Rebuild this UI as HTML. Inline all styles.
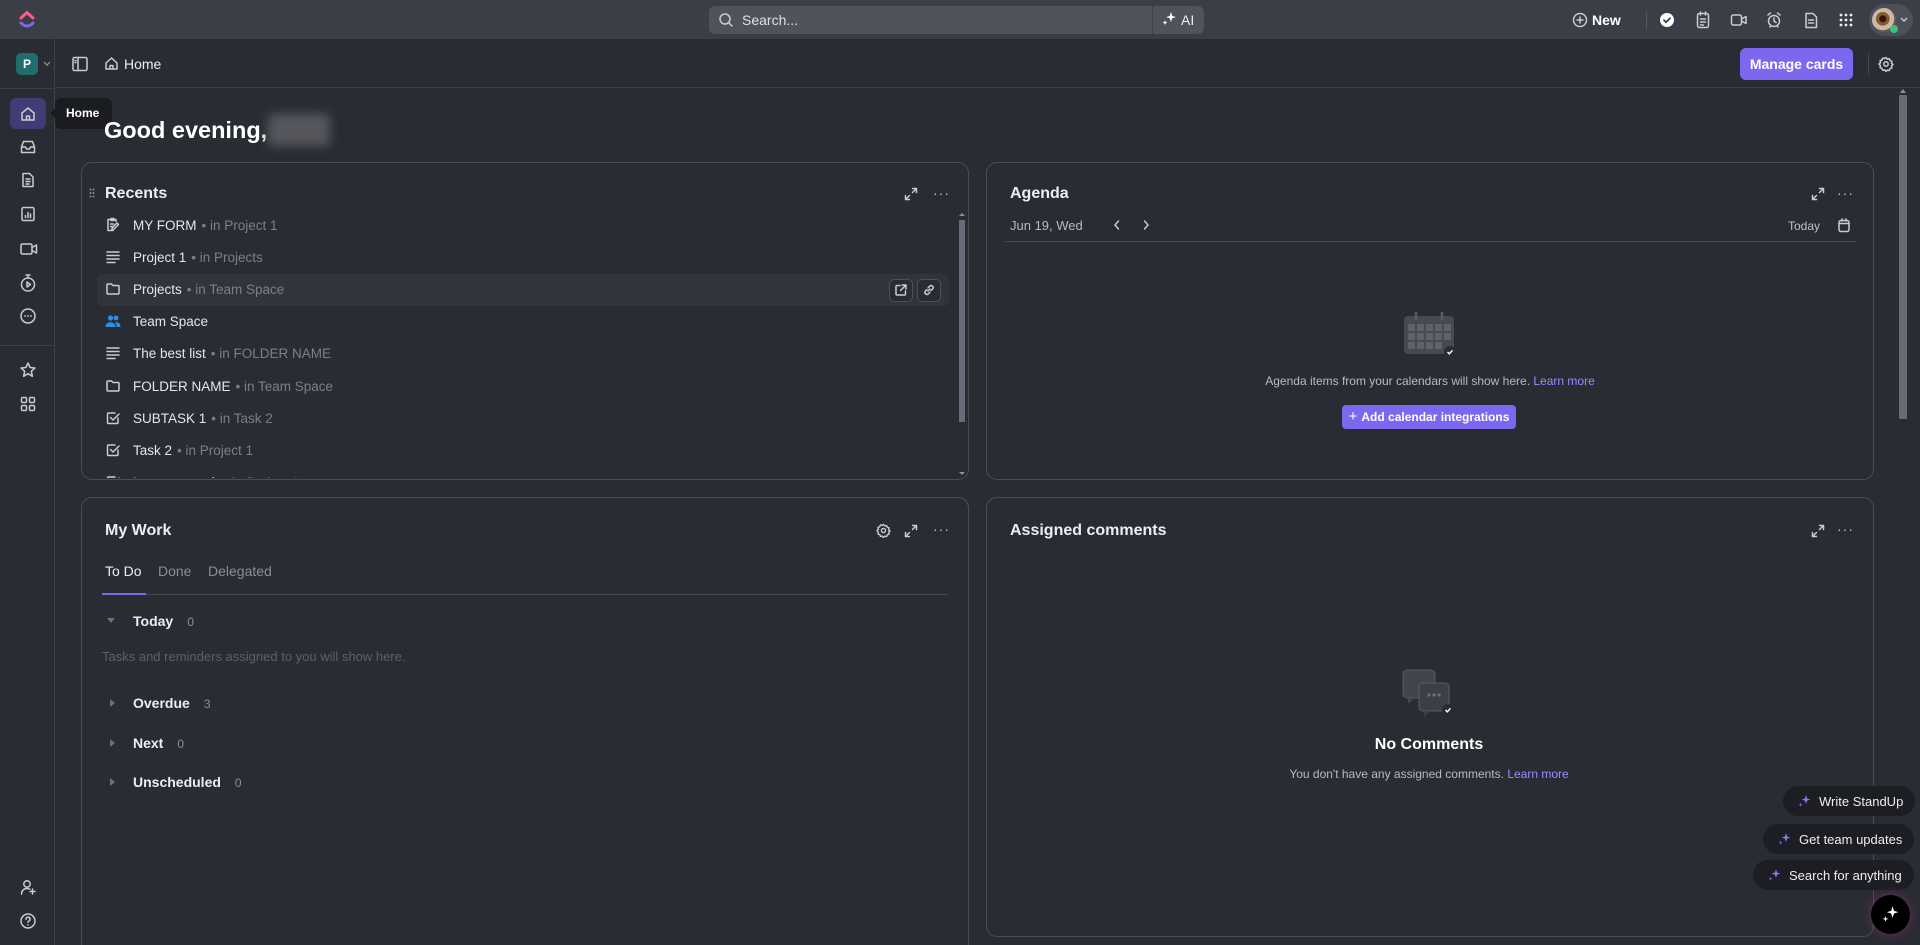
<!DOCTYPE html>
<html><head><meta charset="utf-8"><style>
*{box-sizing:border-box;margin:0;padding:0}
html,body{width:1920px;height:945px;overflow:hidden}
body{background:#2a2c33;font-family:"Liberation Sans",sans-serif;color:#e3e4e8;position:relative;font-size:14px}
.a{position:absolute}
svg{display:block}
.top{left:0;top:0;width:1920px;height:39px;background:#3b3e46}
.side{left:0;top:39px;width:55px;height:906px;background:#2a2c33;border-right:1px solid #3d4048}
.hdr{left:55px;top:39px;width:1865px;height:49px;border-bottom:1px solid #3d4048}
.card{border:1px solid #4a4d56;border-radius:11px;background:#2a2c33}
.ttl{font-size:16px;font-weight:bold;color:#eceef1}
.row{left:97px;width:852px;height:32px;display:flex;align-items:center;padding-left:6px;font-size:13.5px;color:#e6e7ea}
.row .ic{width:20px;margin-right:10px;display:flex;justify-content:center}
.row .m{color:#7c7f88;margin-left:5px}
.ico{stroke:#c9cbd1;fill:none;stroke-width:1.5;stroke-linecap:round;stroke-linejoin:round}
.sec{font-size:14px;font-weight:bold;color:#eceef1}
.cnt{font-size:12px;color:#8b8e97;margin-left:14px;font-weight:normal}
.pill{background:#1d1e23;border-radius:16px;height:30px;display:flex;align-items:center;padding:0 12px 0 14px;font-size:13px;color:#eceef1;white-space:nowrap}
.pill svg{margin-right:8px}
</style></head><body>
<div class="a top"></div>
<svg class="a" style="left:18px;top:10px" width="18" height="20" viewBox="0 0 18 20"><path d="M3 8 L9 2.5 L15 8" stroke="#ff5b8a" stroke-width="3" fill="none" stroke-linecap="round" stroke-linejoin="round"/><path d="M3 13 Q9 19 15 13" stroke="#7b68ee" stroke-width="3" fill="none" stroke-linecap="round"/></svg>
<div class="a" style="left:709px;top:6px;width:495px;height:28px;background:#4f535b;border-radius:6px"></div>
<svg class="a" style="left:718px;top:12px" width="16" height="16" viewBox="0 0 16 16"><circle cx="7" cy="7" r="5" class="ico" stroke="#d6d8dc"/><path d="M11 11 L14 14" class="ico" stroke="#d6d8dc"/></svg>
<div class="a" style="left:742px;top:12px;font-size:14px;color:#dfe0e4">Search...</div>
<div class="a" style="left:1152px;top:6px;width:1px;height:28px;background:#3d4048"></div>
<svg class="a" style="left:1161px;top:11px" width="16" height="16" viewBox="0 0 16 16"><path d="M10 1 L11.3 5 L15 6 L11.3 7.3 L10 11 L8.7 7.3 L5 6 L8.7 5Z" fill="#fff"/><path d="M4 9 L4.7 11 L6.5 11.5 L4.7 12.2 L4 14 L3.3 12.2 L1.5 11.5 L3.3 11Z" fill="#fff"/></svg>
<div class="a" style="left:1181px;top:12px;font-size:14px;color:#eceef1">AI</div>
<svg class="a" style="left:1572px;top:12px" width="16" height="16" viewBox="0 0 16 16"><circle cx="8" cy="8" r="6.5" class="ico" stroke="#fff"/><path d="M8 5v6M5 8h6" class="ico" stroke="#fff"/></svg>
<div class="a" style="left:1592px;top:12px;font-size:14px;font-weight:bold;color:#fff">New</div>
<div class="a" style="left:1646px;top:12px;width:1px;height:17px;background:#565a62"></div>
<svg class="a" style="left:1659px;top:12px" width="16" height="16" viewBox="0 0 16 16"><circle cx="8" cy="8" r="7" fill="#fff"/><path d="M5 8.2l2 2 4-4" stroke="#3b3e46" stroke-width="1.8" fill="none" stroke-linecap="round"/></svg>
<svg class="a" style="left:1695px;top:11px" width="16" height="18" viewBox="0 0 16 18"><rect x="2.5" y="2.5" width="11" height="14" rx="2" class="ico" stroke="#eee"/><path d="M5.5 1v3M10.5 1v3M5.5 8h5M5.5 11h5M5.5 14h3" class="ico" stroke="#eee"/></svg>
<svg class="a" style="left:1730px;top:12px" width="18" height="16" viewBox="0 0 18 16"><rect x="1.5" y="3" width="10" height="10" rx="2" class="ico" stroke="#eee"/><path d="M11.5 7 L16 4.5 V11.5 L11.5 9" class="ico" stroke="#eee"/></svg>
<svg class="a" style="left:1766px;top:11px" width="16" height="18" viewBox="0 0 16 18"><circle cx="8" cy="10" r="5.5" class="ico" stroke="#eee"/><path d="M8 7v3l2 1.5M2 4l2.5-2M14 4l-2.5-2M4 16l1-1.5M12 16l-1-1.5" class="ico" stroke="#eee"/></svg>
<svg class="a" style="left:1803px;top:11px" width="16" height="18" viewBox="0 0 16 18"><path d="M3 2.5h7l3.5 3.5v10.5H3z" class="ico" stroke="#eee"/><path d="M5.5 9h5M5.5 12h5" class="ico" stroke="#eee"/></svg>
<svg class="a" style="left:1838px;top:12px" width="16" height="16" viewBox="0 0 16 16" fill="#eee"><circle cx="3" cy="3" r="1.4"/><circle cx="8" cy="3" r="1.4"/><circle cx="13" cy="3" r="1.4"/><circle cx="3" cy="8" r="1.4"/><circle cx="8" cy="8" r="1.4"/><circle cx="13" cy="8" r="1.4"/><circle cx="3" cy="13" r="1.4"/><circle cx="8" cy="13" r="1.4"/><circle cx="13" cy="13" r="1.4"/></svg>
<div class="a" style="left:1869px;top:4px;width:44px;height:32px;border-radius:16px;background:#4d5058"></div>
<div class="a" style="left:1872px;top:8px;width:24px;height:24px;border-radius:50%;background:radial-gradient(circle at 45% 45%,#2a1a10 0 18%,#8a5a2e 20% 35%,#c8b9a8 38% 60%,#6b5a4a 62%)"></div>
<div class="a" style="left:1890px;top:25px;width:8px;height:8px;border-radius:50%;background:#3fbf7f"></div>
<svg class="a" style="left:1900px;top:17px" width="8" height="6" viewBox="0 0 8 6"><path d="M1 1l3 3 3-3" stroke="#ddd" fill="none" stroke-width="1.2"/></svg>

<div class="a side"></div>
<div class="a" style="left:16px;top:53px;width:22px;height:22px;border-radius:5px;background:#1f6e6b;color:#fff;font-weight:bold;font-size:12px;text-align:center;line-height:22px">P</div>
<svg class="a" style="left:43px;top:61px" width="8" height="6" viewBox="0 0 8 6"><path d="M1 1l3 3 3-3" stroke="#999" fill="none" stroke-width="1.2"/></svg>
<div class="a" style="left:0;top:88px;width:55px;height:1px;background:#3d4048"></div>
<div class="a" style="left:10px;top:98px;width:36px;height:31px;border-radius:6px;background:#413c75"></div>
<svg class="a" style="left:19px;top:105px" width="18" height="18" viewBox="0 0 18 18"><path d="M3 8 L9 3 L15 8 V15 H3Z M7.5 15 V11 H10.5 V15" class="ico" stroke="#b6adff"/></svg>
<svg class="a" style="left:19px;top:138px" width="18" height="18" viewBox="0 0 18 18"><path d="M2.5 9 L4.5 3.5 H13.5 L15.5 9 V14.5 H2.5Z M2.5 9 H6.5 L7.5 11 H10.5 L11.5 9 H15.5" class="ico"/></svg>
<svg class="a" style="left:19px;top:171px" width="18" height="18" viewBox="0 0 18 18"><path d="M4 2.5h6.5L14 6v9.5H4z M7 8h4M7 10.5h4M7 13h3" class="ico"/></svg>
<svg class="a" style="left:19px;top:205px" width="18" height="18" viewBox="0 0 18 18"><rect x="3" y="2.5" width="12" height="13" rx="1.5" class="ico"/><path d="M6.5 12.5v-2M9 12.5v-5M11.5 12.5v-3.5" class="ico"/></svg>
<svg class="a" style="left:19px;top:240px" width="20" height="18" viewBox="0 0 20 18"><rect x="2" y="4" width="11" height="10" rx="1.5" class="ico"/><path d="M13 7.5 L17.5 5 V13 L13 10.5" class="ico"/></svg>
<svg class="a" style="left:19px;top:273px" width="18" height="20" viewBox="0 0 18 20"><circle cx="9" cy="11.5" r="6.5" class="ico"/><path d="M7 2h4M9 2v3M8 9v5l3.5-2.5z" class="ico"/></svg>
<svg class="a" style="left:19px;top:307px" width="18" height="18" viewBox="0 0 18 18"><circle cx="9" cy="9" r="7" class="ico"/><circle cx="6" cy="9" r=".9" fill="#c9cbd1"/><circle cx="9" cy="9" r=".9" fill="#c9cbd1"/><circle cx="12" cy="9" r=".9" fill="#c9cbd1"/></svg>
<div class="a" style="left:0;top:345px;width:55px;height:1px;background:#3d4048"></div>
<svg class="a" style="left:19px;top:361px" width="18" height="18" viewBox="0 0 18 18"><path d="M9 2 L11.1 6.5 L16 7 L12.3 10.3 L13.4 15.3 L9 12.7 L4.6 15.3 L5.7 10.3 L2 7 L6.9 6.5Z" class="ico"/></svg>
<svg class="a" style="left:19px;top:395px" width="18" height="18" viewBox="0 0 18 18"><rect x="2.5" y="2.5" width="5" height="5" rx="1.2" class="ico"/><rect x="10.5" y="2.5" width="5" height="5" rx="1.2" class="ico"/><rect x="2.5" y="10.5" width="5" height="5" rx="1.2" class="ico"/><rect x="10.5" y="10.5" width="5" height="5" rx="1.2" class="ico"/></svg>
<svg class="a" style="left:19px;top:878px" width="18" height="18" viewBox="0 0 18 18"><circle cx="8" cy="6" r="3.2" class="ico"/><path d="M2.5 16c0-3.5 2.5-5.5 5.5-5.5 1 0 2 .2 2.8.7M13.5 11v5M11 13.5h5" class="ico"/></svg>
<svg class="a" style="left:19px;top:912px" width="18" height="18" viewBox="0 0 18 18"><circle cx="9" cy="9" r="7" class="ico"/><path d="M7 7.2a2 2 0 1 1 2.8 1.8c-.6.3-.8.7-.8 1.3" class="ico"/><circle cx="9" cy="12.8" r=".8" fill="#c9cbd1"/></svg>
<div class="a" style="left:55px;top:98px;width:57px;height:31px;border-radius:6px;background:#1b1c20;color:#fff;font-size:12px;font-weight:bold;line-height:31px;padding-left:11px">Home</div>
<div class="a" style="left:50px;top:108px;width:0;height:0;border-top:5px solid transparent;border-bottom:5px solid transparent;border-right:5px solid #1b1c20"></div>

<div class="a hdr"></div>
<svg class="a" style="left:71px;top:55px" width="18" height="18" viewBox="0 0 18 18"><rect x="2" y="2.5" width="14" height="13" rx="1.5" class="ico"/><path d="M7 2.5v13M4 5.5h1M4 7.5h1" class="ico"/></svg>
<svg class="a" style="left:104px;top:56px" width="15" height="15" viewBox="0 0 15 15"><path d="M2 7 L7.5 2 L13 7 V13 H2Z M6 13 V9.5 H9 V13" class="ico" stroke="#e6e7ea"/></svg>
<div class="a" style="left:124px;top:56px;font-size:14px;color:#eceef1">Home</div>
<div class="a" style="left:1740px;top:48px;width:113px;height:32px;border-radius:6px;background:#7b68ee;color:#fff;font-weight:bold;font-size:14px;text-align:center;line-height:32px">Manage cards</div>
<div class="a" style="left:1868px;top:53px;width:1px;height:22px;background:#454850"></div>
<svg class="a" style="left:1878px;top:56px" width="16" height="16" viewBox="0 0 16 16"><circle cx="8" cy="8" r="2.2" class="ico"/><path d="M8 1.5l1.3 1.6 2-.4.7 1.9 1.9.7-.4 2L15 8.6l-1.5 1.3.4 2-1.9.7-.7 1.9-2-.4L8 15.5l-1.3-1.6-2 .4-.7-1.9-1.9-.7.4-2L1 8l1.5-1.3-.4-2 1.9-.7.7-1.9 2 .4z" class="ico" stroke-width="1.2"/></svg>
<div class="a" style="left:1899px;top:95px;width:8px;height:324px;background:#666c78;border-radius:1px"></div>
<div class="a" style="left:1900px;top:89px;width:0;height:0;border-left:3px solid transparent;border-right:3px solid transparent;border-bottom:4px solid #8a8f99"></div>

<div class="a" style="left:104px;top:117px;font-size:23.5px;font-weight:bold;color:#fff">Good evening,</div>
<div class="a" style="left:268px;top:114px;width:62px;height:32px;background:#55575d;filter:blur(5px);border-radius:4px"></div>

<!-- Recents -->
<div class="a card" style="left:81px;top:162px;width:888px;height:318px"></div>
<svg class="a" style="left:89px;top:188px" width="6" height="10" viewBox="0 0 6 10" fill="#8a8d95"><circle cx="1.5" cy="1.5" r="1"/><circle cx="4.5" cy="1.5" r="1"/><circle cx="1.5" cy="5" r="1"/><circle cx="4.5" cy="5" r="1"/><circle cx="1.5" cy="8.5" r="1"/><circle cx="4.5" cy="8.5" r="1"/></svg>
<div class="a ttl" style="left:105px;top:185px">Recents</div>
<svg class="a" style="left:904px;top:187px" width="14" height="14" viewBox="0 0 14 14"><path d="M8.5 1.5h4v4M12.5 1.5L8.5 5.5M5.5 12.5h-4v-4M1.5 12.5l4-4" class="ico" stroke="#b0b3ba"/></svg>
<div class="a" style="left:933px;top:185px;color:#c0c2c8;font-size:14px;letter-spacing:1px">···</div>
<div class="a" style="left:97px;top:274px;width:852px;height:32px;border-radius:6px;background:#31343b"></div>
<div class="a" style="left:889px;top:279px;width:24px;height:23px;border:1px solid #4d5058;border-radius:5px;background:#2a2c33"></div>
<svg class="a" style="left:894px;top:283px" width="14" height="14" viewBox="0 0 14 14"><path d="M6 2.5H3a1 1 0 0 0-1 1v7.5a1 1 0 0 0 1 1h7.5a1 1 0 0 0 1-1V8M8 2h4v4M12 2L6.5 7.5" class="ico" stroke="#c5c7cd" stroke-width="1.3"/></svg>
<div class="a" style="left:917px;top:279px;width:24px;height:23px;border:1px solid #4d5058;border-radius:5px;background:#2a2c33"></div>
<svg class="a" style="left:922px;top:283px" width="14" height="14" viewBox="0 0 14 14"><path d="M6 8l2-2M5 6.5L3.3 8.2a2 2 0 0 0 2.8 2.8L7.8 9.3M9 7.5l1.7-1.7a2 2 0 0 0-2.8-2.8L6.2 4.7" class="ico" stroke="#c5c7cd" stroke-width="1.3"/></svg>
<div class="a" style="left:959px;top:220px;width:6px;height:202px;background:#666c78"></div>
<div class="a" style="left:959px;top:213px;width:0;height:0;border-left:3px solid transparent;border-right:3px solid transparent;border-bottom:3px solid #8a8f99"></div>
<div class="a" style="left:959px;top:472px;width:0;height:0;border-left:3px solid transparent;border-right:3px solid transparent;border-top:3px solid #8a8f99"></div>
<div class="a" style="left:82px;top:214px;width:870px;height:264px;overflow:hidden">
<div class="a row" style="left:15px;top:-5px"><span class="ic"><svg width="16" height="16" viewBox="0 0 16 16"><path d="M4 2.5h7v2M4 2.5H3v11h5M6 1.5h3v2H6z M7 11l5-5 1.5 1.5-5 5H7z M5.5 7h3M5.5 9.5h2" class="ico" stroke-width="1.2"/></svg></span>MY FORM<span class="m">• in Project 1</span></div>
<div class="a row" style="left:15px;top:27px"><span class="ic"><svg width="16" height="14" viewBox="0 0 16 14"><path d="M2 2h12M2 5.5h12M2 9h12M2 12.5h8" class="ico" stroke-width="1.3"/></svg></span>Project 1<span class="m">• in Projects</span></div>
<div class="a row" style="left:15px;top:59px"><span class="ic"><svg width="16" height="14" viewBox="0 0 16 14"><path d="M2 3a1 1 0 0 1 1-1h3.5l1.5 1.5h5a1 1 0 0 1 1 1V11a1 1 0 0 1-1 1H3a1 1 0 0 1-1-1z" class="ico" stroke-width="1.3"/></svg></span>Projects<span class="m">• in Team Space</span></div>
<div class="a row" style="left:15px;top:91px"><span class="ic"><svg width="16" height="14" viewBox="0 0 16 14" fill="#2d8fe6"><circle cx="5.5" cy="4" r="2.6"/><circle cx="11" cy="4" r="2.4"/><path d="M0.5 13c0-3 2.2-4.8 5-4.8s5 1.8 5 4.8z"/><path d="M11.5 8.2c2.4 0 4 1.7 4 4.8h-4c0-2-.6-3.6-1.8-4.6.5-.1 1.1-.2 1.8-.2z"/></svg></span>Team Space</div>
<div class="a row" style="left:15px;top:123px"><span class="ic"><svg width="16" height="14" viewBox="0 0 16 14"><path d="M2 2h12M2 5.5h12M2 9h12M2 12.5h8" class="ico" stroke-width="1.3"/></svg></span>The best list<span class="m">• in FOLDER NAME</span></div>
<div class="a row" style="left:15px;top:156px"><span class="ic"><svg width="16" height="14" viewBox="0 0 16 14"><path d="M2 3a1 1 0 0 1 1-1h3.5l1.5 1.5h5a1 1 0 0 1 1 1V11a1 1 0 0 1-1 1H3a1 1 0 0 1-1-1z" class="ico" stroke-width="1.3"/></svg></span>FOLDER NAME<span class="m">• in Team Space</span></div>
<div class="a row" style="left:15px;top:188px"><span class="ic"><svg width="16" height="16" viewBox="0 0 16 16"><path d="M13 8v4.5a1 1 0 0 1-1 1H3.5a1 1 0 0 1-1-1V4a1 1 0 0 1 1-1H10M5.5 7.5l2.5 2.5 6-6" class="ico" stroke-width="1.3"/></svg></span>SUBTASK 1<span class="m">• in Task 2</span></div>
<div class="a row" style="left:15px;top:220px"><span class="ic"><svg width="16" height="16" viewBox="0 0 16 16"><path d="M13 8v4.5a1 1 0 0 1-1 1H3.5a1 1 0 0 1-1-1V4a1 1 0 0 1 1-1H10M5.5 7.5l2.5 2.5 6-6" class="ico" stroke-width="1.3"/></svg></span>Task 2<span class="m">• in Project 1</span></div>
<div class="a row" style="left:15px;top:252px"><span class="ic"><svg width="16" height="16" viewBox="0 0 16 16"><path d="M13 8v4.5a1 1 0 0 1-1 1H3.5a1 1 0 0 1-1-1V4a1 1 0 0 1 1-1H10M5.5 7.5l2.5 2.5 6-6" class="ico" stroke-width="1.3"/></svg></span>Important task<span class="m">• in Project 1</span></div>
</div>

<!-- Agenda -->
<div class="a card" style="left:986px;top:162px;width:888px;height:318px"></div>
<div class="a ttl" style="left:1010px;top:185px">Agenda</div>
<svg class="a" style="left:1811px;top:187px" width="14" height="14" viewBox="0 0 14 14"><path d="M8.5 1.5h4v4M12.5 1.5L8.5 5.5M5.5 12.5h-4v-4M1.5 12.5l4-4" class="ico" stroke="#5d6068"/></svg>
<div class="a" style="left:1837px;top:185px;color:#c0c2c8;font-size:14px;letter-spacing:1px">···</div>
<div class="a" style="left:1010px;top:218px;font-size:13px;color:#b8bac0">Jun 19, Wed</div>
<svg class="a" style="left:1112px;top:219px" width="10" height="12" viewBox="0 0 10 12"><path d="M6.5 2L3 6l3.5 4" class="ico" stroke="#c5c7cd"/></svg>
<svg class="a" style="left:1141px;top:219px" width="10" height="12" viewBox="0 0 10 12"><path d="M3.5 2L7 6l-3.5 4" class="ico" stroke="#c5c7cd"/></svg>
<div class="a" style="left:1788px;top:219px;font-size:12px;color:#c0c2c8">Today</div>
<svg class="a" style="left:1837px;top:218px" width="14" height="15" viewBox="0 0 14 15"><rect x="2" y="2.5" width="10" height="11" rx="2" class="ico" stroke="#c0c2c8" stroke-width="1.3"/><path d="M2 5.5h10M5 1v2M9 1v2" class="ico" stroke="#c0c2c8" stroke-width="1.3"/></svg>
<div class="a" style="left:1005px;top:241px;width:851px;height:1px;background:#454850"></div>
<svg class="a" style="left:1401px;top:310px" width="56" height="50" viewBox="0 0 56 50"><rect x="3" y="6" width="50" height="38" rx="4" fill="#474a52"/><path d="M15 2v8M41 2v8" stroke="#5a5d65" stroke-width="2.5"/><g fill="#5f626a"><rect x="7" y="14" width="7" height="7" rx="1"/><rect x="16" y="14" width="7" height="7" rx="1"/><rect x="25" y="14" width="7" height="7" rx="1"/><rect x="34" y="14" width="7" height="7" rx="1"/><rect x="43" y="14" width="7" height="7" rx="1"/><rect x="7" y="23" width="7" height="7" rx="1"/><rect x="16" y="23" width="7" height="7" rx="1"/><rect x="25" y="23" width="7" height="7" rx="1"/><rect x="34" y="23" width="7" height="7" rx="1"/><rect x="43" y="23" width="7" height="7" rx="1"/><rect x="7" y="32" width="7" height="7" rx="1"/><rect x="16" y="32" width="7" height="7" rx="1"/><rect x="25" y="32" width="7" height="7" rx="1"/><rect x="34" y="32" width="7" height="7" rx="1"/></g><circle cx="49" cy="42" r="6" fill="#2a2c33"/><path d="M46.5 42l1.8 1.8 3.2-3.5" stroke="#fff" stroke-width="1.4" fill="none"/></svg>
<div class="a" style="left:1180px;top:374px;width:500px;text-align:center;font-size:12px;color:#b8bac0">Agenda items from your calendars will show here. <span style="color:#9b8cff">Learn more</span></div>
<div class="a" style="left:1342px;top:405px;width:174px;height:24px;border-radius:4px;background:#7b68ee;color:#fff;font-size:12px;font-weight:bold;line-height:24px;text-align:center"><span style="font-weight:normal;font-size:15px;margin-right:4px">+</span>Add calendar integrations</div>

<!-- My Work -->
<div class="a card" style="left:81px;top:497px;width:888px;height:470px"></div>
<div class="a ttl" style="left:105px;top:522px">My Work</div>
<svg class="a" style="left:876px;top:523px" width="15" height="15" viewBox="0 0 16 16"><circle cx="8" cy="8" r="2.2" class="ico" stroke="#b0b3ba"/><path d="M8 1.5l1.3 1.6 2-.4.7 1.9 1.9.7-.4 2L15 8.6l-1.5 1.3.4 2-1.9.7-.7 1.9-2-.4L8 15.5l-1.3-1.6-2 .4-.7-1.9-1.9-.7.4-2L1 8l1.5-1.3-.4-2 1.9-.7.7-1.9 2 .4z" class="ico" stroke="#b0b3ba" stroke-width="1.2"/></svg>
<svg class="a" style="left:904px;top:524px" width="14" height="14" viewBox="0 0 14 14"><path d="M8.5 1.5h4v4M12.5 1.5L8.5 5.5M5.5 12.5h-4v-4M1.5 12.5l4-4" class="ico" stroke="#b0b3ba"/></svg>
<div class="a" style="left:933px;top:521px;color:#c0c2c8;font-size:14px;letter-spacing:1px">···</div>
<div class="a" style="left:105px;top:563px;font-size:14px;color:#eceef1">To Do</div>
<div class="a" style="left:158px;top:563px;font-size:14px;color:#8b8e97">Done</div>
<div class="a" style="left:208px;top:563px;font-size:14px;color:#8b8e97">Delegated</div>
<div class="a" style="left:102px;top:594px;width:846px;height:1px;background:#454850"></div>
<div class="a" style="left:102px;top:593px;width:44px;height:2px;background:#7b68ee"></div>
<div class="a" style="left:107px;top:618px;width:0;height:0;border-left:4px solid transparent;border-right:4px solid transparent;border-top:5px solid #6d7078"></div>
<div class="a sec" style="left:133px;top:613px">Today<span class="cnt">0</span></div>
<div class="a" style="left:102px;top:649px;font-size:13px;color:#5d6068">Tasks and reminders assigned to you will show here.</div>
<div class="a" style="left:110px;top:699px;width:0;height:0;border-top:4px solid transparent;border-bottom:4px solid transparent;border-left:5px solid #6d7078"></div>
<div class="a sec" style="left:133px;top:695px">Overdue<span class="cnt">3</span></div>
<div class="a" style="left:110px;top:739px;width:0;height:0;border-top:4px solid transparent;border-bottom:4px solid transparent;border-left:5px solid #6d7078"></div>
<div class="a sec" style="left:133px;top:735px">Next<span class="cnt">0</span></div>
<div class="a" style="left:110px;top:778px;width:0;height:0;border-top:4px solid transparent;border-bottom:4px solid transparent;border-left:5px solid #6d7078"></div>
<div class="a sec" style="left:133px;top:774px">Unscheduled<span class="cnt">0</span></div>

<!-- Assigned comments -->
<div class="a card" style="left:986px;top:497px;width:888px;height:440px"></div>
<div class="a ttl" style="left:1010px;top:522px">Assigned comments</div>
<svg class="a" style="left:1811px;top:524px" width="14" height="14" viewBox="0 0 14 14"><path d="M8.5 1.5h4v4M12.5 1.5L8.5 5.5M5.5 12.5h-4v-4M1.5 12.5l4-4" class="ico" stroke="#5d6068"/></svg>
<div class="a" style="left:1837px;top:521px;color:#c0c2c8;font-size:14px;letter-spacing:1px">···</div>
<svg class="a" style="left:1401px;top:668px" width="56" height="50" viewBox="0 0 56 50"><rect x="2" y="2" width="32" height="28" rx="4" fill="#42454d" stroke="#55585f"/><path d="M7 30v6l6-6" fill="#42454d"/><rect x="18" y="15" width="30" height="28" rx="4" fill="#3c3f47" stroke="#5a5d65"/><path d="M23 43v6l6-6" fill="#3c3f47"/><g fill="#6d7078"><circle cx="28" cy="27" r="1.6"/><circle cx="33" cy="27" r="1.6"/><circle cx="38" cy="27" r="1.6"/></g><circle cx="47" cy="42" r="6" fill="#2a2c33"/><path d="M44.5 42l1.8 1.8 3.2-3.5" stroke="#fff" stroke-width="1.4" fill="none"/></svg>
<div class="a" style="left:1229px;top:736px;width:400px;text-align:center;font-size:16px;font-weight:bold;color:#fff">No Comments</div>
<div class="a" style="left:1179px;top:767px;width:500px;text-align:center;font-size:12px;color:#b8bac0">You don't have any assigned comments. <span style="color:#9b8cff">Learn more</span></div>

<svg width="0" height="0" style="position:absolute"><defs><g id="sp"><path d="M9 1 L10.1 4.6 L13.5 5.5 L10.1 6.6 L9 10 L7.9 6.6 L4.5 5.5 L7.9 4.6Z" fill="#8b7cf6"/><path d="M3.5 8.5 L4.1 10.3 L5.8 10.8 L4.1 11.4 L3.5 13 L2.9 11.4 L1.2 10.8 L2.9 10.3Z" fill="#6b5cd6"/></g></defs></svg>
<div class="a pill" style="left:1783px;top:786px"><svg width="14" height="14" viewBox="0 0 14 14"><use href="#sp"/></svg>Write StandUp</div>
<div class="a pill" style="left:1763px;top:824px"><svg width="14" height="14" viewBox="0 0 14 14"><use href="#sp"/></svg>Get team updates</div>
<div class="a pill" style="left:1753px;top:860px"><svg width="14" height="14" viewBox="0 0 14 14"><use href="#sp"/></svg>Search for anything</div>
<div class="a" style="left:1871px;top:895px;width:39px;height:39px;border-radius:50%;background:#000;box-shadow:0 0 10px rgba(180,60,140,.45)"></div>
<svg class="a" style="left:1881px;top:905px" width="18" height="18" viewBox="0 0 14 14"><path d="M9 1 L10.1 4.6 L13.5 5.5 L10.1 6.6 L9 10 L7.9 6.6 L4.5 5.5 L7.9 4.6Z" fill="#fff"/><path d="M3.5 8.5 L4.1 10.3 L5.8 10.8 L4.1 11.4 L3.5 13 L2.9 11.4 L1.2 10.8 L2.9 10.3Z" fill="#fff"/></svg>
</body></html>
